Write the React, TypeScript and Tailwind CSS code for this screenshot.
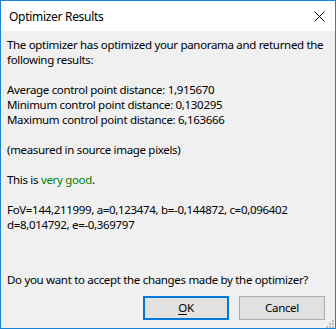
const lines = [
  'The optimizer has optimized your panorama and returned the',
  'following results:',
  '',
  'Average control point distance: 1,915670',
  'Minimum control point distance: 0,130295',
  'Maximum control point distance: 6,163666',
  '',
  '(measured in source image pixels)',
  '',
];

export default function App() {
  return (
    <div
      className="w-[336px] h-[329px] flex flex-col border border-[#1883d7] bg-[#f0f0f0] text-[11.5px] tracking-[-0.32px] text-black overflow-hidden"
      style={{ fontFamily: '"Noto Sans", "Open Sans", sans-serif' }}
    >
      {/* title bar */}
      <div className="h-[30px] bg-white flex items-center justify-between pl-[8px] pr-[10px]">
        <span className="pt-[1px] text-[12px] tracking-[-0.3px]">Optimizer Results</span>
        <svg width="11" height="11" viewBox="0 0 11 11" className="mt-[1px]">
          <path d="M0.5 0.5 L10.5 10.5 M10.5 0.5 L0.5 10.5" stroke="#000" strokeWidth="1" />
        </svg>
      </div>

      <div className="flex-1 flex flex-col px-[6px] pt-[6px]">
        {lines.map((l, i) => (
          <div key={i} className="h-[15px] leading-[15px] whitespace-nowrap">{l}</div>
        ))}
        <div className="h-[15px] leading-[15px]">
          This is <span className="text-[#008000]">very good</span>.
        </div>
        <div className="h-[15px]" />
        <div className="h-[15px] leading-[15px] whitespace-nowrap">FoV=144,211999, a=0,123474, b=-0,144872, c=0,096402</div>
        <div className="h-[15px] leading-[15px] whitespace-nowrap">d=8,014792, e=-0,369797</div>

        <div className="mt-[40px] h-[15px] leading-[15px] whitespace-nowrap">Do you want to accept the changes made by the optimizer?</div>

        <div className="mt-[9px] flex justify-end gap-[10px] pr-[4px]">
          <button className="w-[86px] h-[24px] bg-[#e1e1e1] border-2 border-[#0078d7] leading-none">
            <span className="underline underline-offset-2">O</span>K
          </button>
          <button className="w-[86px] h-[24px] bg-[#e1e1e1] border border-[#adadad] leading-none">
            Cancel
          </button>
        </div>
        <div className="relative flex-1">
          <div className="absolute right-[-5px] bottom-[0px] grid grid-cols-3 gap-[1px]">
            <span className="w-[2px] h-[2px]" />
            <span className="w-[2px] h-[2px]" />
            <span className="w-[2px] h-[2px] bg-[#bdbdbd]" />
            <span className="w-[2px] h-[2px]" />
            <span className="w-[2px] h-[2px] bg-[#bdbdbd]" />
            <span className="w-[2px] h-[2px] bg-[#bdbdbd]" />
            <span className="w-[2px] h-[2px] bg-[#bdbdbd]" />
            <span className="w-[2px] h-[2px] bg-[#bdbdbd]" />
            <span className="w-[2px] h-[2px] bg-[#bdbdbd]" />
          </div>
        </div>
      </div>
    </div>
  );
}
